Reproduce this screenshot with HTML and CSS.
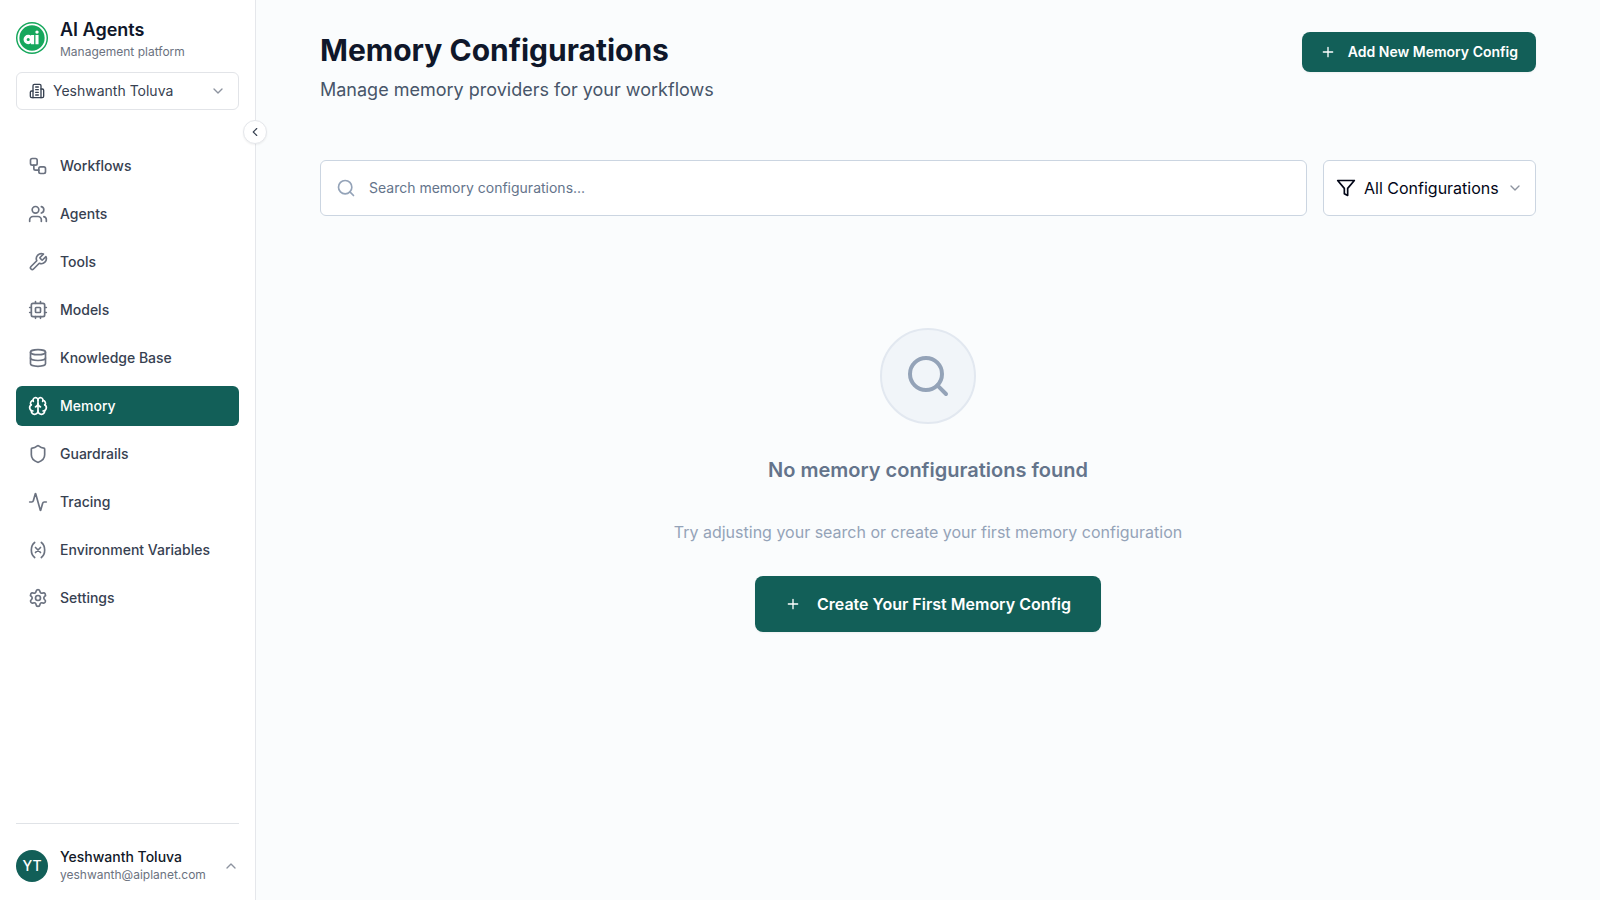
FILE: index.html
```html
<!DOCTYPE html>
<html lang="en">
<head>
<meta charset="utf-8">
<meta name="viewport" content="width=device-width, initial-scale=1">
<title>Memory Configurations</title>
<link rel="stylesheet" href="styles.css">
</head>
<body>
<div class="app">
  <aside class="sidebar">
    <div class="brand">
      <svg class="logo" viewBox="0 0 32 32" aria-hidden="true">
        <circle cx="16" cy="16" r="16" fill="#16a75c"/>
        <circle cx="16" cy="16" r="13.6" fill="none" stroke="#fff" stroke-width="1.9"/>
        <g fill="none" stroke="#fff" stroke-width="3.1">
          <circle cx="12.2" cy="17.500" r="3.100"/>
          <path d="M16.600 12.900v9.300M21 12.900v9.300"/>
        </g>
        <circle cx="21" cy="10.100" r="1.700" fill="#fff"/>
      </svg>
      <div>
        <p class="brand-name">AI Agents</p>
        <p class="brand-tag">Management platform</p>
      </div>
    </div>
    <div class="picker org">
      <svg class="icon picker-lead" viewBox="0 0 24 24" aria-hidden="true"><path d="M6 22V4a2 2 0 0 1 2-2h8a2 2 0 0 1 2 2v18Z"/><path d="M6 12H4a2 2 0 0 0-2 2v6a2 2 0 0 0 2 2h2"/><path d="M18 9h2a2 2 0 0 1 2 2v9a2 2 0 0 1-2 2h-2"/><path d="M10 6h4M10 10h4M10 14h4M10 18h4"/></svg>
      <select class="picker-select" aria-label="Organization"><option>Yeshwanth Toluva</option></select>
      <svg class="icon picker-chevron" viewBox="0 0 24 24" aria-hidden="true"><path d="m6 9 6 6 6-6"/></svg>
    </div>
    <button class="collapse" type="button" aria-label="Collapse sidebar">
      <svg class="icon" viewBox="0 0 24 24" aria-hidden="true"><path d="m15 18-6-6 6-6"/></svg>
    </button>
    <nav class="nav">
      <a class="nav-link" href="#"><svg class="icon" viewBox="0 0 24 24" aria-hidden="true"><rect width="8" height="8" x="3" y="3" rx="2"/><path d="M7 11v4a2 2 0 0 0 2 2h4"/><rect width="8" height="8" x="13" y="13" rx="2"/></svg>Workflows</a>
      <a class="nav-link" href="#"><svg class="icon" viewBox="0 0 24 24" aria-hidden="true"><path d="M16 21v-2a4 4 0 0 0-4-4H6a4 4 0 0 0-4 4v2"/><circle cx="9" cy="7" r="4"/><path d="M22 21v-2a4 4 0 0 0-3-3.87"/><path d="M16 3.13a4 4 0 0 1 0 7.75"/></svg>Agents</a>
      <a class="nav-link" href="#"><svg class="icon" viewBox="0 0 24 24" aria-hidden="true"><path d="M14.7 6.3a1 1 0 0 0 0 1.4l1.6 1.6a1 1 0 0 0 1.4 0l3.77-3.77a6 6 0 0 1-7.94 7.94l-6.91 6.91a2.12 2.12 0 0 1-3-3l6.91-6.91a6 6 0 0 1 7.94-7.94l-3.76 3.76z"/></svg>Tools</a>
      <a class="nav-link" href="#"><svg class="icon" viewBox="0 0 24 24" aria-hidden="true"><rect width="16" height="16" x="4" y="4" rx="2"/><rect width="6" height="6" x="9" y="9" rx="1"/><path d="M15 2v2M15 20v2M2 15h2M2 9h2M20 15h2M20 9h2M9 2v2M9 20v2"/></svg>Models</a>
      <a class="nav-link" href="#"><svg class="icon" viewBox="0 0 24 24" aria-hidden="true"><ellipse cx="12" cy="5" rx="9" ry="3"/><path d="M3 5v14a9 3 0 0 0 18 0V5"/><path d="M3 12a9 3 0 0 0 18 0"/></svg>Knowledge Base</a>
      <a class="nav-link active" href="#" aria-current="page"><svg class="icon" viewBox="0 0 24 24" aria-hidden="true"><path d="M12 18V5"/><path d="M15 13a4.17 4.17 0 0 1-3-4 4.17 4.17 0 0 1-3 4"/><path d="M17.598 6.5A3 3 0 1 0 12 5a3 3 0 1 0-5.598 1.5"/><path d="M17.997 5.125a4 4 0 0 1 2.526 5.77"/><path d="M18 18a4 4 0 0 0 2-7.464"/><path d="M19.967 17.483A4 4 0 1 1 12 18a4 4 0 1 1-7.967-.517"/><path d="M6 18a4 4 0 0 1-2-7.464"/><path d="M6.003 5.125a4 4 0 0 0-2.526 5.77"/></svg>Memory</a>
      <a class="nav-link" href="#"><svg class="icon" viewBox="0 0 24 24" aria-hidden="true"><path d="M20 13c0 5-3.5 7.5-7.66 8.95a1 1 0 0 1-.67-.01C7.5 20.5 4 18 4 13V6a1 1 0 0 1 1-1c2 0 4.500-1.200 6.240-2.720a1.170 1.170 0 0 1 1.520 0C14.510 3.810 17 5 19 5a1 1 0 0 1 1 1z"/></svg>Guardrails</a>
      <a class="nav-link" href="#"><svg class="icon" viewBox="0 0 24 24" aria-hidden="true"><path d="M22 12h-2.480a2 2 0 0 0-1.930 1.460l-2.350 8.360a.25.25 0 0 1-.48 0L9.240 2.180a.25.25 0 0 0-.48 0l-2.350 8.360A2 2 0 0 1 4.490 12H2"/></svg>Tracing</a>
      <a class="nav-link" href="#"><svg class="icon" viewBox="0 0 24 24" aria-hidden="true"><path d="M8 21s-4-3-4-9 4-9 4-9"/><path d="M16 3s4 3 4 9-4 9-4 9"/><path d="m15 9-6 6M9 9l6 6"/></svg>Environment Variables</a>
      <a class="nav-link" href="#"><svg class="icon" viewBox="0 0 24 24" aria-hidden="true"><path d="M9.671 4.136a2.340 2.340 0 0 1 4.659 0 2.340 2.340 0 0 0 3.319 1.915 2.340 2.340 0 0 1 2.330 4.033 2.340 2.340 0 0 0 0 3.831 2.340 2.340 0 0 1-2.330 4.033 2.340 2.340 0 0 0-3.319 1.915 2.340 2.340 0 0 1-4.659 0 2.340 2.340 0 0 0-3.320-1.915 2.340 2.340 0 0 1-2.330-4.033 2.340 2.340 0 0 0 0-3.831A2.340 2.340 0 0 1 6.350 6.051a2.340 2.340 0 0 0 3.319-1.915"/><circle cx="12" cy="12" r="3"/></svg>Settings</a>
    </nav>
    <div class="account-area">
      <button class="account" type="button">
        <span class="avatar">YT</span>
        <span class="account-text"><span class="account-name">Yeshwanth Toluva</span><span class="account-mail">yeshwanth@aiplanet.com</span></span>
        <svg class="icon" viewBox="0 0 24 24" aria-hidden="true"><path d="m18 15-6-6-6 6"/></svg>
      </button>
    </div>
  </aside>
  <main class="main">
    <header class="page-head">
      <div>
        <h1 class="title">Memory Configurations</h1>
        <p class="subtitle">Manage memory providers for your workflows</p>
      </div>
      <button class="btn" type="button"><svg class="icon" viewBox="0 0 24 24" aria-hidden="true"><path d="M5 12h14M12 5v14"/></svg>Add New Memory Config</button>
    </header>
    <div class="filters">
      <label class="search">
        <svg class="icon" viewBox="0 0 24 24" aria-hidden="true"><circle cx="11" cy="11" r="8"/><path d="m21 21-4.300-4.300"/></svg>
        <input class="search-input" type="text" placeholder="Search memory configurations..." aria-label="Search memory configurations">
      </label>
      <div class="picker filter">
        <svg class="icon picker-lead" viewBox="0 0 24 24" aria-hidden="true"><path d="M22 3H2l8 9.460V19l4 2v-8.540L22 3z"/></svg>
        <select class="picker-select" aria-label="Filter configurations"><option>All Configurations</option></select>
        <svg class="icon picker-chevron" viewBox="0 0 24 24" aria-hidden="true"><path d="m6 9 6 6 6-6"/></svg>
      </div>
    </div>
    <section class="empty">
      <div class="empty-badge"><svg class="icon" viewBox="0 0 24 24" aria-hidden="true"><circle cx="11" cy="11" r="8"/><path d="m21 21-4.300-4.300"/></svg></div>
      <h2 class="empty-title">No memory configurations found</h2>
      <p class="empty-text">Try adjusting your search or create your first memory configuration</p>
      <button class="btn btn-large" type="button"><svg class="icon" viewBox="0 0 24 24" aria-hidden="true"><path d="M5 12h14M12 5v14"/></svg>Create Your First Memory Config</button>
    </section>
  </main>
</div>
</body>
</html>
```
FILE: styles.css
```css
* { box-sizing: border-box; }
body {
  margin: 0;
  font-family: Inter, "Liberation Sans", sans-serif;
  font-size: 14px;
  line-height: 20px;
  color: #0f172a;
  background: #fafcfd;
}
h1, h2, p { margin: 0; }
button, input, select { font: inherit; color: inherit; }
button { cursor: pointer; }

.icon {
  width: 20px;
  height: 20px;
  flex: none;
  fill: none;
  stroke: currentColor;
  stroke-width: 2;
  stroke-linecap: round;
  stroke-linejoin: round;
}

.app { display: flex; min-height: 100vh; }

.sidebar {
  position: relative;
  display: flex;
  flex-direction: column;
  flex: none;
  width: 256px;
  padding: 16px 16px 6px;
  background: #fff;
  border-right: 1px solid #e5e7eb;
}
.brand { display: flex; align-items: center; gap: 12px; margin-bottom: 12px; }
.logo { width: 32px; height: 32px; flex: none; }
.brand-name { font-size: 18px; line-height: 28px; font-weight: 600; }
.brand-tag { font-size: 12px; line-height: 16px; color: #6b7280; }

.picker { display: grid; grid-template-columns: auto 1fr auto; align-items: center; }
.picker > * { grid-row: 1; }
.picker-lead { grid-column: 1; margin-left: 13px; }
.picker-select {
  grid-column: 1 / -1;
  width: 100%;
  height: 100%;
  appearance: none;
  border: 1px solid #e2e4e8;
  border-radius: 6px;
  background: #fff;
}
.picker-lead, .picker-chevron { z-index: 1; pointer-events: none; }
.picker-chevron { grid-column: 3; width: 16px; height: 16px; margin-right: 13px; color: #8d939f; }

.org { height: 38px; color: #374151; }
.org .picker-lead { width: 16px; height: 16px; }
.org .picker-select { padding: 0 36px; }

.collapse {
  position: absolute;
  top: 120px;
  right: -12px;
  display: grid;
  place-items: center;
  width: 24px;
  height: 24px;
  padding: 0;
  color: #374151;
  background: #fff;
  border: 1px solid #e5e7eb;
  border-radius: 50%;
  box-shadow: 0 1px 2px rgba(0, 0, 0, 0.06);
}
.collapse .icon { width: 14px; height: 14px; }

.nav { display: grid; gap: 8px; margin-top: 36px; }
.nav-link {
  display: flex;
  align-items: center;
  gap: 12px;
  padding: 10px 12px;
  border-radius: 6px;
  font-weight: 500;
  color: #374151;
  text-decoration: none;
}
.nav-link .icon { color: #6b7280; }
.nav-link.active { color: #fff; background: #125f58; }
.nav-link.active .icon { color: #fff; }

.account-area { margin-top: auto; padding-top: 14px; border-top: 1px solid #e0e3e7; }
.account {
  display: flex;
  align-items: center;
  gap: 12px;
  width: 100%;
  padding: 10px 0;
  text-align: left;
  background: none;
  border: 0;
}
.avatar {
  display: grid;
  place-items: center;
  width: 32px;
  height: 32px;
  border-radius: 50%;
  font-weight: 500;
  color: #fff;
  background: #125f58;
}
.account-text { display: grid; flex: 1; }
.account-name { line-height: 18px; font-weight: 500; color: #111827; }
.account-mail { font-size: 12px; line-height: 18px; color: #6b7280; }
.account .icon { width: 16px; height: 16px; color: #8d939f; }

.main { flex: 1; min-width: 0; padding: 32px 64px; }
.page-head { display: flex; justify-content: space-between; align-items: flex-start; }
.title { font-size: 30px; line-height: 36px; font-weight: 700; }
.subtitle { margin-top: 8px; font-size: 18px; line-height: 28px; color: #475569; }

.btn {
  display: flex;
  align-items: center;
  gap: 12px;
  height: 40px;
  padding: 0 18px;
  font-weight: 600;
  color: #fff;
  background: #125f58;
  border: 0;
  border-radius: 8px;
  box-shadow: 0 1px 2px rgba(0, 0, 0, 0.05);
}
.btn .icon { width: 16px; height: 16px; }
.btn-large { gap: 16px; height: 56px; padding: 0 30px; font-size: 16px; line-height: 24px; }

.filters { display: flex; gap: 16px; margin-top: 56px; }
.search {
  display: flex;
  align-items: center;
  gap: 13px;
  flex: 1;
  height: 56px;
  padding: 0 15px;
  background: #fff;
  border: 1px solid #cbd5e1;
  border-radius: 6px;
}
.search .icon { color: #94a3b8; }
.search-input { flex: 1; min-width: 0; padding: 0; border: 0; outline: 0; background: none; }
.search-input::placeholder { color: #64748b; opacity: 1; }

.filter { height: 56px; font-size: 16px; line-height: 24px; color: #020617; }
.filter .picker-select { padding: 0 36px 0 40px; border-color: #cbd5e1; }

.empty { display: flex; flex-direction: column; align-items: center; padding-top: 112px; }
.empty-badge {
  display: grid;
  place-items: center;
  width: 96px;
  height: 96px;
  color: #94a3b8;
  background: #f1f5f9;
  border: 2px solid #e2e8f0;
  border-radius: 50%;
}
.empty-badge .icon { width: 48px; height: 48px; }
.empty-title { margin-top: 32px; font-size: 20px; line-height: 28px; font-weight: 600; color: #64748b; }
.empty-text { margin: 36px 0 32px; font-size: 16px; line-height: 24px; color: #94a3b8; }
```
